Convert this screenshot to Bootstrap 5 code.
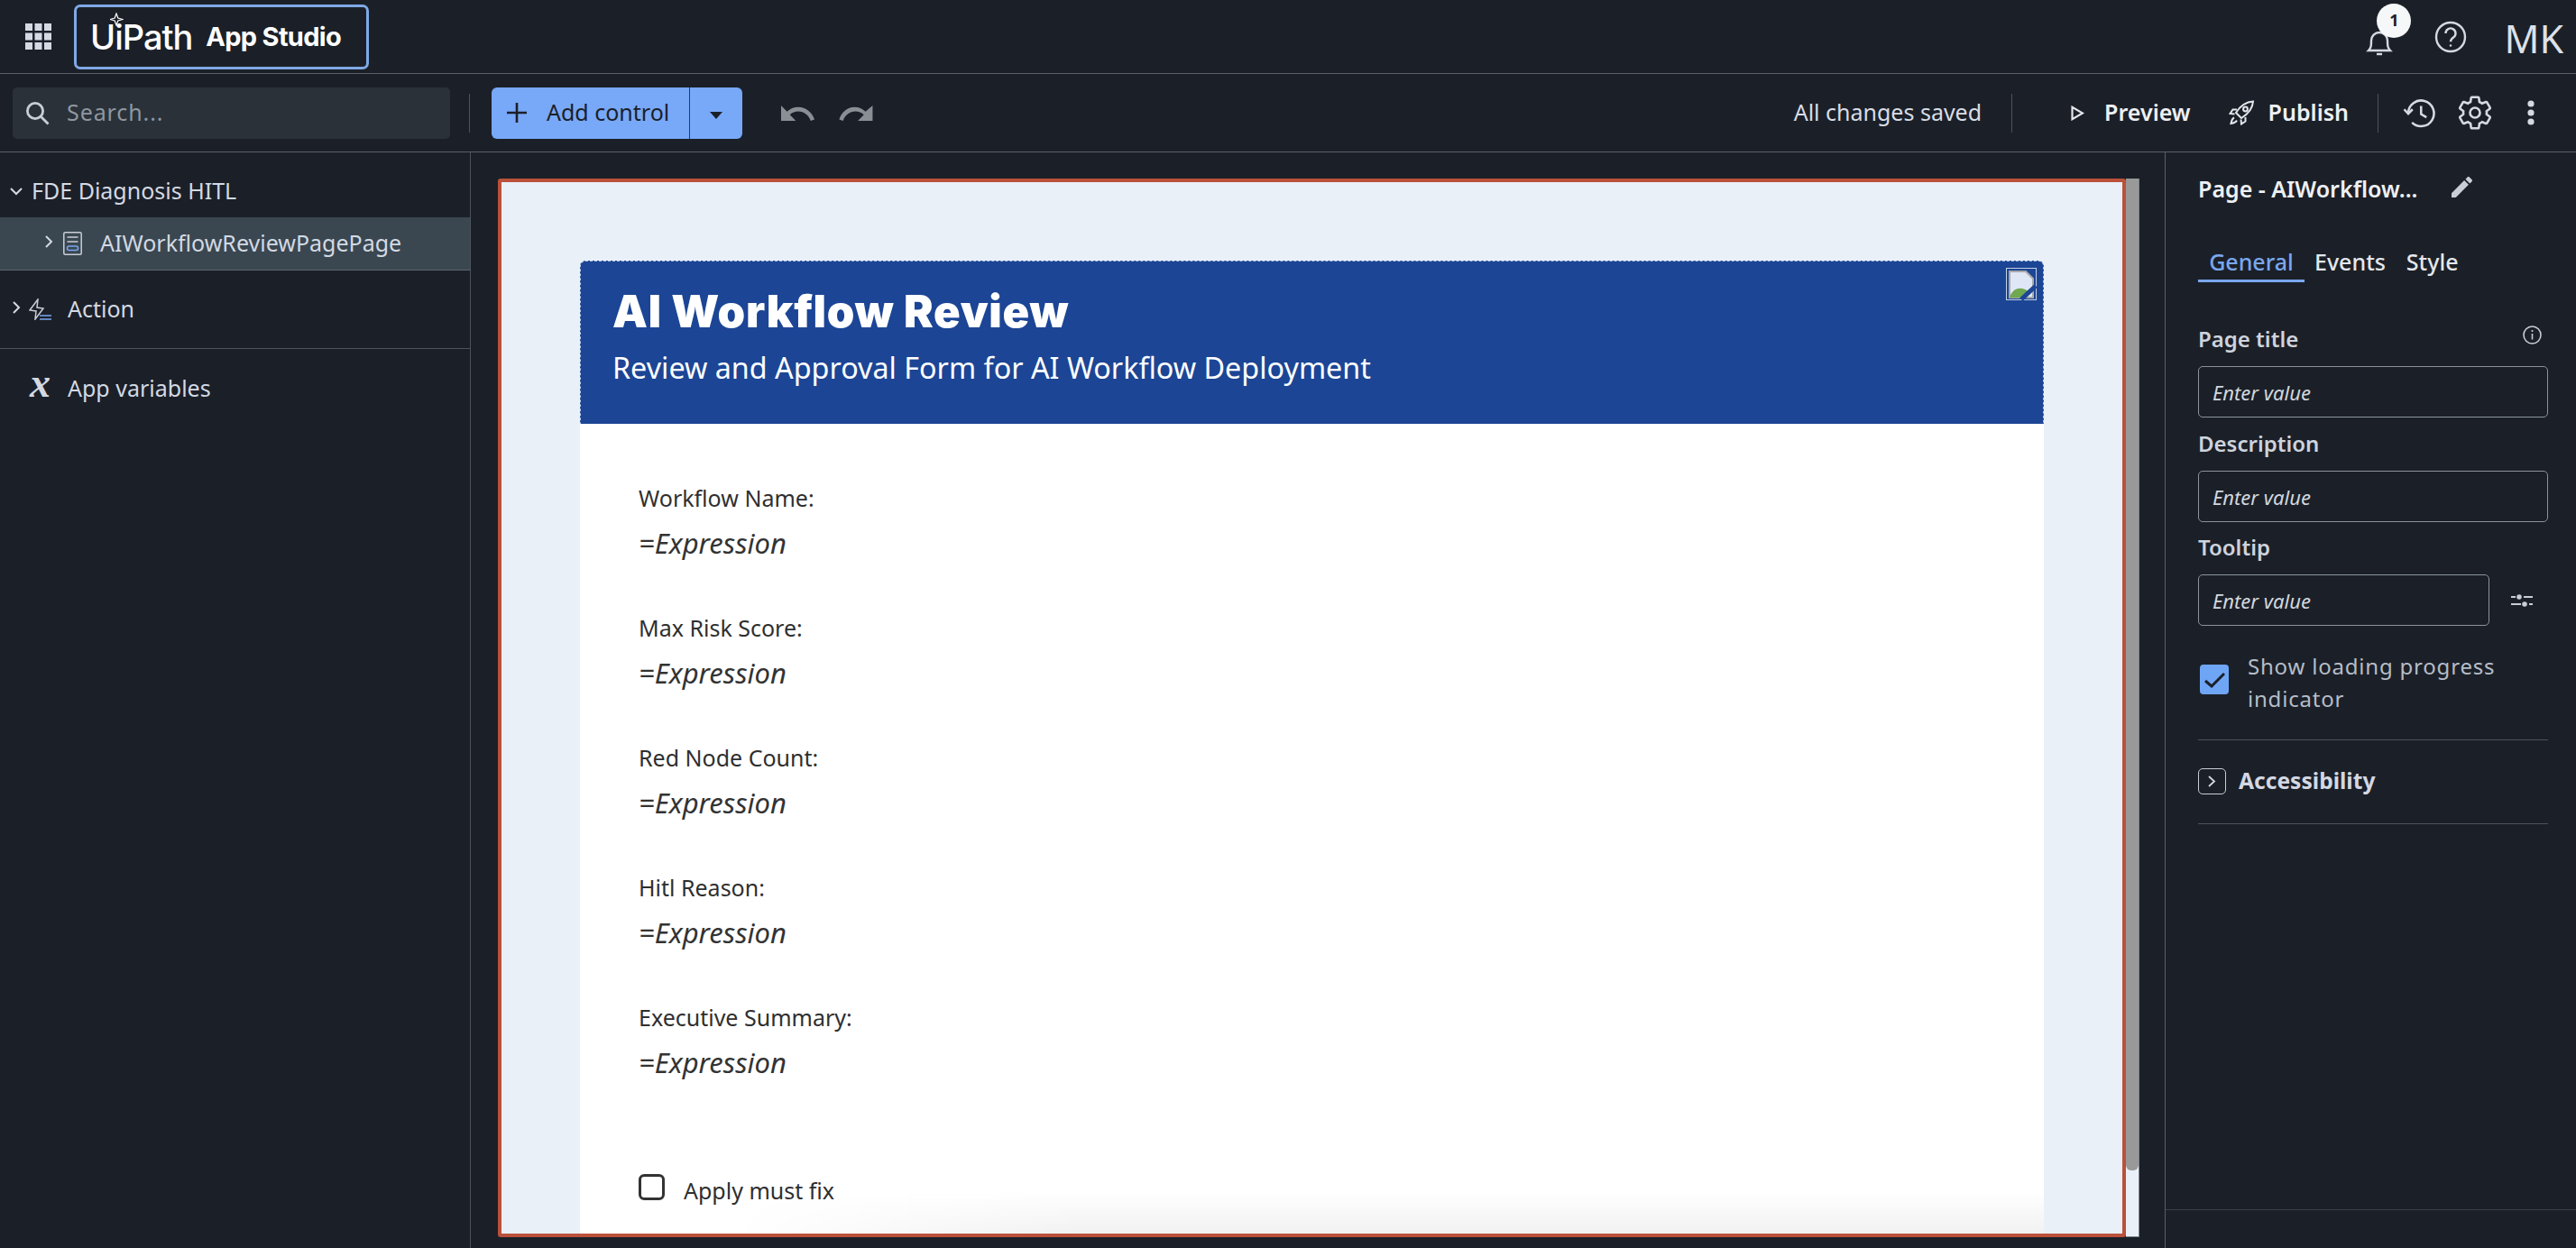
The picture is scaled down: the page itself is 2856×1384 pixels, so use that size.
<!DOCTYPE html>
<html lang="en">
<head>
<meta charset="UTF-8">
<title>App Studio</title>
<link href="https://cdn.jsdelivr.net/npm/bootstrap@5.3.0/dist/css/bootstrap.min.css" rel="stylesheet">
<style>
    html, body { height: 100%; }
    body { background: #1b2028; color: #d8dde6; font-family: "Noto Sans", sans-serif; font-size: 25px; overflow: hidden; }
    .shell { height: 1384px; }
    .top-bar { height: 82px; border-bottom: 1px solid #5a6068; padding-left: 28px; }
    .grid-icon { width: 29px; height: 29px; }
    .logo-box { width: 327px; height: 72px; margin-left: 25px; border: 3px solid #7fa9e6; border-radius: 7px; padding-left: 15px; }
    .logo-main { position: relative; font-family: Inter, sans-serif; font-weight: 500; font-size: 38px; color: #fff; line-height: 1; letter-spacing: -1px; }
    .logo-spark { position: absolute; left: 22px; top: -8px; width: 15px; height: 15px; }
    .logo-sub { font-family: Inter, sans-serif; font-weight: 700; font-size: 29px; color: #fff; margin-left: 15px; letter-spacing: -.7px; }
    .bell-wrap { position: relative; width: 30px; height: 32px; margin-right: 46px; margin-top: 2px; }
    .bell-badge { position: absolute; left: 12px; top: -22px; width: 38px; height: 38px; background: #f6f7f9; color: #1b2028; border-radius: 50%; font-size: 18px; font-weight: 700; }
    .user-initials { font-size: 43px; color: #dde1e9; margin-left: 41px; margin-right: 14px; line-height: 1; margin-top: 4px; }
    .tool-bar { height: 87px; border-bottom: 1px solid #5a6068; padding-left: 14px; }
    .search-box { width: 485px; height: 57px; background: #2a3139; border-radius: 5px; padding-left: 14px; }
    .search-box .form-control { background: transparent; border: 0; color: #8f97a0; font-size: 25px; padding: 0 0 0 20px; box-shadow: none; letter-spacing: .9px; }
    .search-box .form-control::placeholder { color: #8f97a0; opacity: 1; }
    .v-rule { width: 1px; background: #4b525a; height: 43px; }
    .add-main, .add-caret { background: #78a8f8; border: 0; color: #1b2028; height: 57px; font-size: 25px; }
    .add-main { width: 220px; padding: 0 0 0 17px; border-radius: 6px 0 0 6px; }
    .add-caret { width: 59px; padding: 0; border-left: 1px solid #2c3a52; border-radius: 0 6px 6px 0; }
    .add-main:hover, .add-caret:hover { background: #78a8f8; color: #1b2028; }
    .save-text { color: #d8dde6; font-size: 25px; margin-right: 33px; }
    .tool-strong { font-weight: 600; color: #eef0f4; font-size: 25px; }
    .main-row { height: 1215px; }
    .tree-pane { width: 522px; flex: none; border-right: 1px solid #4b525a; }
    .tree-row { padding-left: 11px; color: #d3d9e3; font-size: 25px; }
    .tree-project { height: 72px; padding-top: 14px; }
    .tree-page { height: 59px; background: #3a4750; border-bottom: 1px solid #5a6570; padding-left: 50px; }
    .tree-action { height: 87px; border-bottom: 1px solid #4b525a; padding-left: 14px; }
    .tree-vars { height: 88px; padding-left: 33px; }
    .var-glyph { font-family: "Liberation Serif", serif; font-style: italic; font-weight: 700; font-size: 46px; line-height: 1; width: 42px; margin-top: -12px; }
    .canvas-pane { flex: 1 1 auto; padding: 29px 28px 0 30px; min-width: 0; }
    .frame-row { height: 1174px; }
    .page-frame { position: relative; flex: 1 1 auto; border: 4px solid #bb513a; border-radius: 3px; background: #e9f0f8; padding: 87px 87px 0; overflow: hidden; }
    .scroll-track { width: 15px; flex: none; background: #e9f0f8; border-right: 1px solid #7c838b; border-bottom: 1px solid #7c838b; }
    .scroll-thumb { height: 1100px; background: #999; border-radius: 0 0 6px 6px; }
    .form-head { height: 181px; background: #1c4595; border: 1px dashed #b9c8e4; border-bottom: 0; border-radius: 6px 6px 0 0; padding: 26px 21px 0 35px; color: #fff; position: relative; }
    .form-title { font-family: Inter, sans-serif; font-weight: 900; font-size: 49px; line-height: 60px; letter-spacing: .75px; margin: 0; }
    .form-sub { font-size: 32.3px; line-height: 44px; margin-top: 9px; }
    .broken-img { position: absolute; right: 7px; top: 7px; width: 34px; height: 36px; }
    .form-body { background: #fff; height: 900px; padding: 64px 65px 0; color: #2f2f2f; }
    .field-label { line-height: 36px; font-size: 25px; }
    .field-value { line-height: 40px; font-size: 31px; font-style: italic; margin: 12px 0 56px; color: #333; }
    .must-row { margin-top: 104px; }
    .must-box { width: 29px; height: 29px; border: 3px solid #333; border-radius: 3px; margin: 0; background: #fff; flex: none; }
    .must-label { line-height: 36px; font-size: 25px; margin: 0 0 0 21px; }
    .form-fade { position: absolute; left: 87px; right: 87px; bottom: 0; height: 46px; background: linear-gradient(to bottom, rgba(0,0,0,0), rgba(0,0,0,.055)); -webkit-mask-image: linear-gradient(to right, transparent 170px, black 560px); mask-image: linear-gradient(to right, transparent 170px, black 560px); }
    .props-pane { width: 456px; flex: none; border-left: 1px solid #5a6068; }
    .props-inner { padding: 21px 31px 0 36px; }
    .props-title { height: 40px; font-weight: 600; color: #eef0f4; font-size: 25px; }
    .props-tabs { margin-top: 40px; gap: 11px; }
    .props-tabs .nav-link { color: #e4e7ec; padding: 0; height: 43px; line-height: 41px; font-weight: 500; font-size: 25px; border-bottom: 3px solid transparent; }
    .props-tabs .nav-link.active { color: #7aa7ef; border-bottom-color: #7aa7ef; width: 118px; text-align: center; }
    .props-label { line-height: 34px; font-weight: 600; color: #ced3dd; font-size: 24px; }
    .props-input { height: 57px; background: transparent; border: 1px solid #8d939b; border-radius: 5px; font-style: italic; font-size: 22px; padding: 0 15px; color: #d8dde6; }
    .props-input::placeholder { color: #d3d7de; opacity: 1; }
    .props-input:focus { background: transparent; }
    .loader-check { width: 32px; height: 33px; margin: 16px 0 0 2px; background: #6fa5f5; border-radius: 4px; flex: none; }
    .loader-text { line-height: 36px; font-size: 24px; letter-spacing: .8px; color: #b6bdc8; margin-left: 21px; }
    .props-rule { height: 1px; background: #4b525a; }
    .access-row { height: 92px; font-weight: 700; color: #d3d8e2; font-size: 24.6px; padding-bottom: 2px; }
    .access-box { width: 31px; height: 29px; border: 1px solid #c9ced6; border-radius: 5px; margin-right: 14px; }
    .props-foot { height: 43px; border-top: 1px solid #3a4048; margin-top: auto; }
</style>
</head>
<body>
<div class="shell d-flex flex-column">
    <header class="top-bar d-flex align-items-center">
        <svg class="grid-icon" viewBox="0 0 29 29" fill="#d5d9e3">
            <rect width="8" height="8"/><rect x="10.5" width="8" height="8"/><rect x="21" width="8" height="8"/>
            <rect y="10.5" width="8" height="8"/><rect x="10.5" y="10.5" width="8" height="8"/><rect x="21" y="10.5" width="8" height="8"/>
            <rect y="21" width="8" height="8"/><rect x="10.5" y="21" width="8" height="8"/><rect x="21" y="21" width="8" height="8"/>
        </svg>
        <div class="logo-box d-flex align-items-center">
            <span class="logo-main">UiPath
                <svg class="logo-spark" viewBox="0 0 15 15"><path d="M7 1 L8.8 6 L14 7.5 L8.8 9 L7 14 L5.2 9 L0 7.5 L5.2 6Z" fill="#1b2028" stroke="#fff" stroke-width="1.2"/></svg>
            </span>
            <span class="logo-sub">App Studio</span>
        </div>
        <div class="ms-auto d-flex align-items-center">
            <div class="bell-wrap">
                <svg width="30" height="32" viewBox="0 0 30 32" fill="none" stroke="#d5d9e3" stroke-width="2.4"><path d="M3 25c3-3 3-6 3-11a9 9 0 0 1 18 0c0 5 0 8 3 11z"/><path d="M12 29h6"/></svg>
                <span class="bell-badge d-flex align-items-center justify-content-center">1</span>
            </div>
            <svg width="36" height="36" viewBox="0 0 36 36" fill="none" stroke="#d5d9e3" stroke-width="2.4"><circle cx="18" cy="18" r="16"/><path d="M12.5 14a5.5 5.5 0 1 1 8.6 4.5c-2 1.4-3.1 2.3-3.1 4.7"/><circle cx="18" cy="27.5" r="1.2" fill="#d5d9e3" stroke="none"/></svg>
            <span class="user-initials">MK</span>
        </div>
    </header>

    <div class="tool-bar d-flex align-items-center">
        <div class="search-box input-group align-items-center flex-nowrap">
            <svg width="27" height="27" viewBox="0 0 27 27" fill="none" stroke="#c9ced6" stroke-width="2.8"><circle cx="11" cy="11" r="8.6"/><path d="M17 17l8.5 8.5"/></svg>
            <input class="form-control" type="text" placeholder="Search...">
        </div>
        <div class="v-rule" style="margin-left:21px"></div>
        <div class="btn-group" style="margin-left:24px">
            <button class="btn add-main d-flex align-items-center" type="button">
                <svg width="22" height="22" viewBox="0 0 22 22" stroke="#1b2028" stroke-width="2.6"><path d="M11 0v22M0 11h22"/></svg>
                <span style="margin-left:22px">Add control</span>
            </button>
            <button class="btn add-caret" type="button"><svg width="14" height="8" viewBox="0 0 14 8" fill="#1b2028"><path d="M0 0h14L7 8z"/></svg></button>
        </div>
        <svg width="38" height="21" viewBox="2 6 21 11" fill="#8a8f96" style="margin-left:43px" preserveAspectRatio="none"><path d="M12.5 8c-2.65 0-5.05.99-6.9 2.6L2 7v9h9l-3.62-3.62c1.39-1.16 3.16-1.88 5.12-1.88 3.54 0 6.55 2.31 7.6 5.5l2.37-.78C21.08 11.03 17.15 8 12.5 8z"/></svg>
        <svg width="38" height="21" viewBox="2 6 21 11" fill="#8a8f96" style="margin-left:26px" preserveAspectRatio="none"><path d="M18.4 10.6C16.55 8.99 14.15 8 11.5 8 7.35 8 3.42 11.03 2.23 15.22l2.37.78c1.05-3.19 4.05-5.5 7.6-5.5 1.95 0 3.73.72 5.12 1.88L13.7 16H22.7V7z"/></svg>
        <div class="ms-auto d-flex align-items-center">
            <span class="save-text">All changes saved</span>
            <div class="v-rule"></div>
            <svg width="15" height="17" viewBox="0 0 15 17" fill="none" stroke="#e4e7ec" stroke-width="2.2" style="margin-left:65px"><path d="M1.5 1.8v13.4L13 8.5z"/></svg>
            <span class="tool-strong" style="margin-left:22px">Preview</span>
            <svg width="29" height="28" viewBox="0 0 29 28" fill="none" stroke="#e4e7ec" stroke-width="2" style="margin-left:42px"><path d="M27 1.5C19 2 13 6 8 14l6 6C22 15 26.500 9 27 1.500z"/><circle cx="18.500" cy="10" r="2.400"/><path d="M9 10.500H4.500L1.500 15l5 .5M18.500 19v4.500L14 26.500l-.5-5M6 19.500c-2 1-3 3.500-3.500 6.500 3-.5 5.500-1.500 6.500-3.500"/></svg>
            <span class="tool-strong" style="margin-left:15px">Publish</span>
            <div class="v-rule" style="margin-left:32px"></div>
            <svg width="38" height="36" viewBox="0 0 24 24" fill="none" stroke="#d5d9e3" stroke-width="1.7" style="margin-left:26px"><path d="M4 12.500a9.500 9.500 0 1 1 2.800 6.700"/><path d="M1 9.500l3 3.200 3.200-3.200"/><path d="M13.500 7v6l4 2.400"/></svg>
            <svg width="38" height="38" viewBox="1 1 22 22" fill="none" stroke="#d5d9e3" stroke-width="1.5" style="margin-left:24px"><path d="M19.430 12.980c.040-.320.070-.640.070-.980 0-.340-.030-.660-.070-.980l2.110-1.650c.190-.150.240-.420.120-.640l-2-3.460c-.090-.160-.260-.250-.440-.250-.060 0-.120.010-.170.030l-2.490 1c-.520-.400-1.080-.730-1.690-.980l-.380-2.650C14.460 2.180 14.250 2 14 2h-4c-.250 0-.460.180-.490.420l-.380 2.650c-.610.250-1.170.590-1.690.980l-2.490-1c-.060-.020-.120-.030-.180-.030-.170 0-.340.090-.430.250l-2 3.460c-.130.220-.070.490.12.640l2.110 1.650c-.040.320-.070.650-.070.980 0 .330.030.660.070.980l-2.110 1.650c-.190.150-.240.420-.12.640l2 3.460c.090.160.260.250.440.250.060 0 .120-.010.170-.030l2.490-1c.520.400 1.080.730 1.690.980l.380 2.650c.030.240.240.420.490.420h4c.250 0 .460-.180.490-.420l.380-2.650c.610-.250 1.170-.590 1.690-.980l2.490 1c.060.020.120.030.180.030.170 0 .340-.090.430-.250l2-3.460c.120-.220.070-.490-.12-.64l-2.110-1.650z"/><circle cx="12" cy="12" r="3.200"/></svg>
            <svg width="12" height="28" viewBox="0 0 12 28" fill="#d5d9e3" style="margin-left:37px;margin-right:44px"><circle cx="6" cy="4" r="3.600"/><circle cx="6" cy="14" r="3.600"/><circle cx="6" cy="24" r="3.600"/></svg>
        </div>
    </div>

    <div class="main-row d-flex">
        <aside class="tree-pane">
            <div class="tree-row tree-project d-flex align-items-center">
                <svg width="14" height="9" viewBox="0 0 14 9" fill="none" stroke="#d3d9e3" stroke-width="2"><path d="M1 1l6 6 6-6"/></svg>
                <span style="margin-left:10px">FDE Diagnosis HITL</span>
            </div>
            <div class="tree-row tree-page d-flex align-items-center">
                <svg width="9" height="14" viewBox="0 0 9 14" fill="none" stroke="#d3d9e3" stroke-width="2" style="margin-top:-4px"><path d="M1 1l6 6-6 6"/></svg>
                <svg width="21" height="26" viewBox="0 0 21 26" fill="none" stroke="#c9ced6" stroke-width="1.500" style="margin-left:11px"><rect x=".8" y=".8" width="19.400" height="24.400" rx="1.500"/><path d="M4.500 6h12M4.500 11h12"/><rect x="4.500" y="16" width="12" height="4.500" rx="2" stroke="#7aa7ef"/></svg>
                <span style="margin-left:20px">AIWorkflowReviewPagePage</span>
            </div>
            <div class="tree-row tree-action d-flex align-items-center">
                <svg width="9" height="14" viewBox="0 0 9 14" fill="none" stroke="#d3d9e3" stroke-width="2" style="margin-top:-4px"><path d="M1 1l6 6-6 6"/></svg>
                <svg width="26" height="24" viewBox="0 0 26 24" fill="none" stroke="#c9ced6" stroke-width="1.500" style="margin-left:9px"><path d="M10 1L1 13l7 1-1 9 9-12-7-1z"/><path d="M12 19h13M12 23h13" stroke="#7aa7ef"/></svg>
                <span style="margin-left:17px">Action</span>
            </div>
            <div class="tree-row tree-vars d-flex align-items-center">
                <span class="var-glyph">x</span>
                <span>App variables</span>
            </div>
        </aside>

        <main class="canvas-pane">
            <div class="frame-row d-flex">
                <div class="page-frame">
                    <div class="form-head">
                        <h1 class="form-title">AI Workflow Review</h1>
                        <div class="form-sub">Review and Approval Form for AI Workflow Deployment</div>
                        <svg class="broken-img" viewBox="0 0 34 36">
                            <rect x=".5" y=".5" width="33" height="35" fill="none" stroke="#c4d0e6"/>
                            <path d="M4 4h18l8 8v21H4z" fill="#dfe6f5" stroke="#a9a9a9" stroke-width="2"/>
                            <path d="M4 33c3-10 12-14 22-6l-5 6z" fill="#6fa84e"/>
                            <path d="M17 35L33 20" stroke="#1c4595" stroke-width="5"/>
                        </svg>
                    </div>
                    <div class="form-body">
                        <div class="field-label">Workflow Name:</div>
                        <div class="field-value">=Expression</div>
                        <div class="field-label">Max Risk Score:</div>
                        <div class="field-value">=Expression</div>
                        <div class="field-label">Red Node Count:</div>
                        <div class="field-value">=Expression</div>
                        <div class="field-label">Hitl Reason:</div>
                        <div class="field-value">=Expression</div>
                        <div class="field-label">Executive Summary:</div>
                        <div class="field-value">=Expression</div>
                        <div class="must-row d-flex align-items-start">
                            <input class="form-check-input must-box" type="checkbox" aria-label="Apply must fix">
                            <span class="must-label">Apply must fix</span>
                        </div>
                    </div>
                    <div class="form-fade"></div>
                </div>
                <div class="scroll-track"><div class="scroll-thumb"></div></div>
            </div>
        </main>

        <aside class="props-pane d-flex flex-column">
            <div class="props-inner">
                <div class="props-title d-flex align-items-center">
                    <span>Page - AIWorkflow...</span>
                    <svg width="23" height="23" viewBox="3 3 18 18" fill="#c9ced6" style="margin-left:38px;margin-top:-5px"><path d="M3 17.250V21h3.750L17.810 9.940l-3.750-3.750L3 17.250zM20.710 7.040c.390-.390.390-1.020 0-1.410l-2.340-2.340c-.390-.390-1.020-.390-1.410 0l-1.830 1.830 3.750 3.750 1.830-1.830z"/></svg>
                </div>
                <ul class="nav props-tabs">
                    <li class="nav-item"><a class="nav-link active" href="#">General</a></li>
                    <li class="nav-item"><a class="nav-link" href="#">Events</a></li>
                    <li class="nav-item"><a class="nav-link" href="#" style="margin-left:12px">Style</a></li>
                </ul>
                <div class="props-label d-flex align-items-center justify-content-between" style="margin-top:46px;margin-bottom:13px">
                    <span>Page title</span>
                    <svg width="21" height="21" viewBox="0 0 21 21" fill="none" stroke="#c9ced6" stroke-width="1.600" style="margin-right:7px;margin-top:-10px"><circle cx="10.500" cy="10.500" r="9.500"/><path d="M10.500 9v6.500"/><circle cx="10.500" cy="6" r="1.100" fill="#c9ced6" stroke="none"/></svg>
                </div>
                <input class="form-control props-input" type="text" placeholder="Enter value">
                <div class="props-label" style="margin-top:12px;margin-bottom:13px">Description</div>
                <input class="form-control props-input" type="text" placeholder="Enter value">
                <div class="props-label" style="margin-top:11px;margin-bottom:13px">Tooltip</div>
                <div class="d-flex align-items-center">
                    <input class="form-control props-input" type="text" placeholder="Enter value" style="width:323px">
                    <svg width="24" height="14" viewBox="0 0 24 14" fill="#c9ced6" style="margin-left:24px"><rect y="2" width="5" height="2"/><circle cx="9" cy="3" r="2.800"/><rect x="14" y="2" width="10" height="2"/><rect y="10" width="11" height="2"/><circle cx="15" cy="11" r="2.800"/><rect x="20" y="10" width="4" height="2"/></svg>
                </div>
                <div class="d-flex align-items-start" style="margin-top:27px">
                    <div class="loader-check d-flex align-items-center justify-content-center">
                        <svg width="24" height="18" viewBox="0 0 24 18" fill="none" stroke="#1b2028" stroke-width="3"><path d="M2 10l7 6L23 2"/></svg>
                    </div>
                    <span class="loader-text">Show loading progress indicator</span>
                </div>
                <div class="props-rule" style="margin-top:27px"></div>
                <div class="access-row d-flex align-items-center">
                    <span class="access-box d-flex align-items-center justify-content-center">
                        <svg width="9" height="13" viewBox="0 0 9 13" fill="none" stroke="#d3d8e2" stroke-width="1.800"><path d="M1 1l6 5.500-6 5.500"/></svg>
                    </span>
                    <span>Accessibility</span>
                </div>
                <div class="props-rule"></div>
            </div>
            <div class="props-foot"></div>
        </aside>
    </div>
</div>
<script src="https://cdn.jsdelivr.net/npm/bootstrap@5.3.0/dist/js/bootstrap.bundle.min.js"></script>
</body>
</html>
